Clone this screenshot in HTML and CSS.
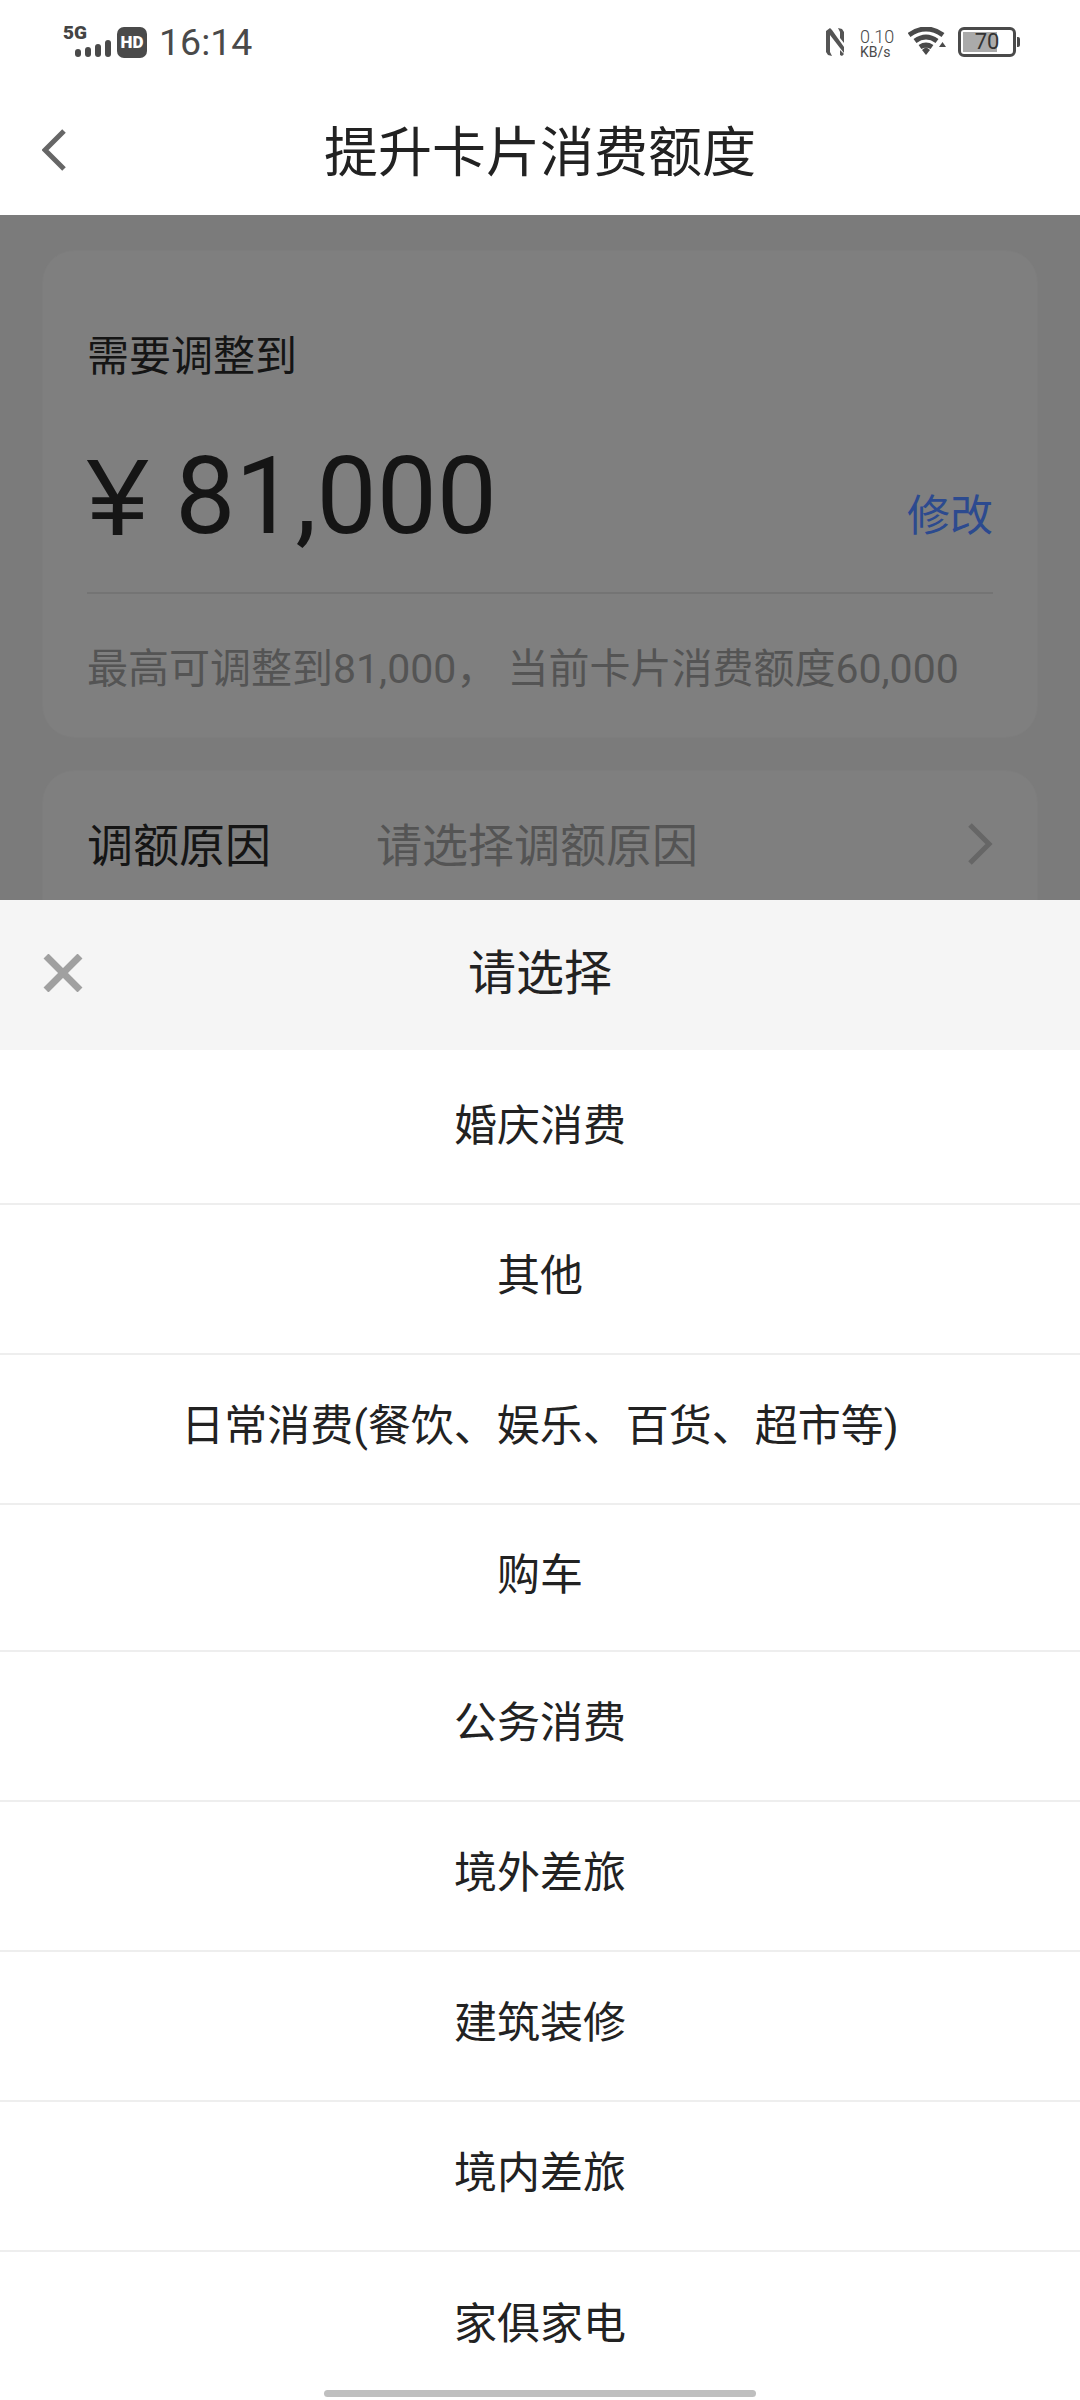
FILE: index.html
```html
<!DOCTYPE html>
<html lang="zh-CN">
<head>
  <meta charset="UTF-8" />
  <meta name="viewport" content="width=device-width, initial-scale=1.0"/>
  <title>提升卡片消费额度</title>
  <link rel="stylesheet" href="styles.css">
</head>
<body>

  <div class="statusbar">
    <div class="status-left">
      <div class="signal">
        <span class="signal-5g">5G</span>
        <svg class="signal-bars" width="36" height="17" viewBox="0 0 36 17">
          <rect x="0" y="9" width="6" height="8" rx="3"/>
          <rect x="10" y="7" width="6" height="10" rx="3"/>
          <rect x="20" y="4" width="6" height="13" rx="3"/>
          <rect x="30" y="0" width="6" height="17" rx="3"/>
        </svg>
      </div>
      <span class="hd">HD</span>
      <span class="time">16:14</span>
    </div>
    <div class="status-right">
      <svg width="18" height="30" viewBox="0 0 18 30" fill="#555">
        <path d="M0 4 L4 1 L6 3 L18 20 V26 L14 21 L4 8 V25 L6 29 L2 28 L0 25 Z"/>
        <path d="M12 1 L16 2 L18 5 V16 L14 11 V5 Z"/>
        <path d="M14 23 L18 27 L16 29 L14 28 Z"/>
      </svg>
      <div class="speed"><span class="speed-num">0.10</span><span class="speed-unit">KB/s</span></div>
      <svg width="38" height="28" viewBox="0 0 38 28">
        <path d="M1 8 Q18 -4 35 8" class="wifi-arc"/>
        <path d="M7 14 Q18 6 29 14" class="wifi-arc"/>
        <path d="M12 20 Q18 16 24 20" class="wifi-arc"/>
        <path d="M14 23 L18 20 L22 23 L18 28 Z" fill="#4a4a4a"/>
        <path d="M31 20 L38 20 L34.500 15 Z" fill="#4a4a4a"/>
      </svg>
      <div class="battery">
        <div class="battery-body">
          <div class="battery-fill"></div>
          <span class="battery-num">70</span>
        </div>
        <div class="battery-nub"></div>
      </div>
    </div>
  </div>

  <div class="navbar">
    <svg class="nav-back" width="24" height="42" viewBox="0 0 24 42">
      <path d="M22 2 L3 21 L22 40"/>
    </svg>
    <h1 class="nav-title">提升卡片消费额度</h1>
  </div>

  <div class="content">
    <div class="card card-amount">
      <div class="amount-label">需要调整到</div>
      <div class="amount-row">
        <div class="amount-value"><span class="yen">¥</span><span>81,000</span></div>
        <a class="amount-edit">修改</a>
      </div>
      <div class="amount-hint">最高可调整到81,000， 当前卡片消费额度60,000</div>
    </div>
    <div class="card card-reason">
      <span class="reason-label">调额原因</span>
      <span class="reason-value">请选择调额原因</span>
      <svg class="reason-arrow" width="26" height="42" viewBox="0 0 26 42">
        <path d="M3 2 L22 21 L3 40"/>
      </svg>
    </div>
  </div>

  <div class="sheet">
    <div class="sheet-head">
      <svg class="sheet-close" width="40" height="38" viewBox="0 0 40 38">
        <path d="M3 2 L37 36 M37 2 L3 36"/>
      </svg>
      <span class="sheet-title">请选择</span>
    </div>
    <div class="sheet-item first">婚庆消费</div>
    <div class="sheet-item">其他</div>
    <div class="sheet-item">日常消费(餐饮、娱乐、百货、超市等)</div>
    <div class="sheet-item short">购车</div>
    <div class="sheet-item">公务消费</div>
    <div class="sheet-item">境外差旅</div>
    <div class="sheet-item">建筑装修</div>
    <div class="sheet-item">境内差旅</div>
    <div class="sheet-item last">家俱家电</div>
    <div class="home-bar"></div>
  </div>

</body>
</html>
```

FILE: styles.css
```css
* {
  box-sizing: border-box;
}

html, body {
  margin: 0;
  height: 2400px;
  overflow: hidden;
}

body {
  position: relative;
  width: 1080px;
  background-color: #fff;
  font-family: Roboto, "Noto Sans CJK SC", sans-serif;
  color: #222;
}

.statusbar {
  height: 84px;
  padding: 25px 60px 0 63px;
  display: flex;
  justify-content: space-between;
  align-items: flex-start;
}

.status-left, .status-right {
  display: flex;
  align-items: flex-start;
}

.signal {
  width: 47px;
  height: 32px;
  display: flex;
  flex-direction: column;
  margin-right: 7px;
}

.signal-5g {
  font-size: 19px;
  line-height: 15px;
  font-weight: 900;
  color: #444;
}

.signal-bars {
  margin-left: 12px;
  fill: #4a4a4a;
}

.hd {
  width: 30px;
  height: 31px;
  margin-top: 2px;
  background-color: #4a4a4a;
  border-radius: 7px;
  color: #fff;
  font-size: 17px;
  line-height: 31px;
  font-weight: 900;
  text-align: center;
}

.time {
  margin: -1px 0 0 12px;
  font-size: 37.500px;
  line-height: 36px;
  color: #4a4a4a;
}

.status-right {
  padding-top: 2px;
}

.speed {
  width: 38px;
  margin: 1px 10px 0 16px;
  display: flex;
  flex-direction: column;
  color: #4a4a4a;
  white-space: nowrap;
}

.speed-num {
  font-size: 18px;
  line-height: 17px;
  font-weight: 300;
}

.speed-unit {
  font-size: 14px;
  line-height: 14px;
}

.wifi-arc {
  fill: none;
  stroke: #4a4a4a;
  stroke-width: 5;
}

.battery {
  margin-left: 12px;
  display: flex;
  align-items: center;
}

.battery-body {
  position: relative;
  width: 58px;
  height: 30px;
  border: 3px solid #4a4a4a;
  border-radius: 6px;
  padding: 2px;
}

.battery-fill {
  width: 34px;
  height: 100%;
  background-color: #aaa;
}

.battery-num {
  position: absolute;
  left: 0;
  right: 0;
  top: 0;
  text-align: center;
  font-size: 22px;
  line-height: 24px;
  color: #333;
}

.battery-nub {
  width: 3px;
  height: 10px;
  margin-left: 1px;
  background-color: #4a4a4a;
  border-radius: 0 2px 2px 0;
}

.navbar {
  height: 131px;
  position: relative;
  display: flex;
  align-items: center;
  justify-content: center;
}

.nav-back {
  position: absolute;
  left: 42px;
  top: 45px;
  fill: none;
  stroke: #666;
  stroke-width: 5;
}

.nav-title {
  margin: 8px 0 0;
  font-size: 54px;
  line-height: 70px;
  font-weight: 400;
  color: #222;
}

.content {
  height: 685px;
  padding: 35px 42px 0;
  background-color: #7b7b7b;
  overflow: hidden;
}

.card {
  background-color: #7f7f7f;
  border: 1px solid #7d7d7d;
  border-radius: 32px;
}

.card-amount {
  height: 488px;
  padding: 76px 44px 0;
}

.amount-label {
  font-size: 42px;
  line-height: 60px;
  color: #151515;
}

.amount-row {
  height: 207px;
  padding-top: 55px;
  display: flex;
  justify-content: space-between;
  align-items: flex-start;
  border-bottom: 2px solid #747474;
}

.amount-value {
  display: flex;
  align-items: center;
  font-size: 107px;
  line-height: 110px;
  color: #151515;
}

.yen {
  margin-right: 27px;
  font-family: "Liberation Sans", sans-serif;
  font-size: 110px;
}

.amount-edit {
  margin-top: 44px;
  font-size: 43px;
  line-height: 60px;
  color: #2c4a8f;
}

.amount-hint {
  margin-top: 47px;
  font-size: 41px;
  line-height: 56px;
  color: #545454;
  white-space: nowrap;
}

.card-reason {
  height: 200px;
  margin-top: 32px;
  padding: 42px 44px 0;
  display: flex;
  align-items: flex-start;
}

.reason-label {
  width: 289px;
  font-size: 46px;
  line-height: 66px;
  color: #151515;
}

.reason-value {
  flex: 1;
  font-size: 46px;
  line-height: 66px;
  color: #545454;
}

.reason-arrow {
  margin-top: 10px;
  fill: none;
  stroke: #666;
  stroke-width: 5;
}

.sheet-head {
  height: 150px;
  position: relative;
  display: flex;
  align-items: center;
  justify-content: center;
  background-color: #f5f5f5;
}

.sheet-close {
  position: absolute;
  left: 43px;
  top: 54px;
  fill: none;
  stroke: #a0a0a0;
  stroke-width: 7;
}

.sheet-title {
  margin-bottom: 2px;
  font-size: 48px;
  line-height: 70px;
  color: #222;
}

.sheet-item {
  height: 150px;
  padding-bottom: 14px;
  display: flex;
  align-items: center;
  justify-content: center;
  border-bottom: 2px solid #eee;
  font-size: 43px;
  color: #222;
}

.sheet-item.first {
  height: 155px;
  padding-bottom: 9px;
}

.sheet-item.short {
  height: 147px;
}

.sheet-item.last {
  border-bottom: none;
}

.home-bar {
  position: absolute;
  left: 324px;
  bottom: 3px;
  width: 432px;
  height: 7px;
  border-radius: 4px;
  background-color: #bfbfbf;
}
```
